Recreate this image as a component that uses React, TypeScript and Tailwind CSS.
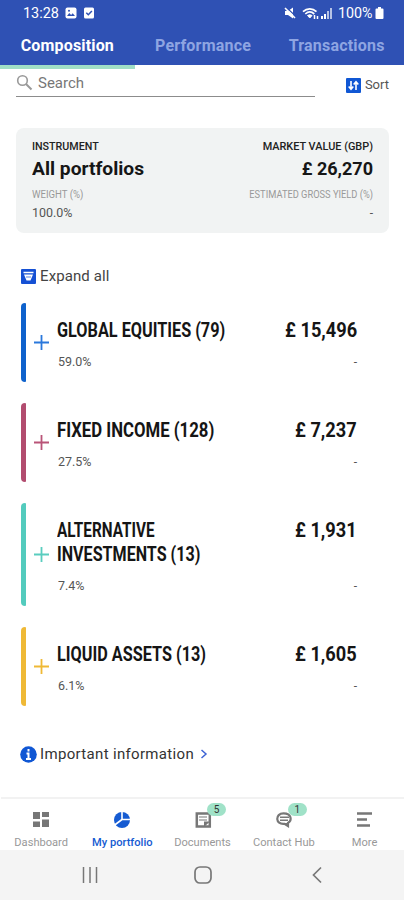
import clsx from "clsx";
import type { ReactNode } from "react";

type Holding = {
  name: ReactNode;
  value: string;
  weight: string;
  bar: string;
  plus: string;
  height: string;
};

const holdings: Holding[] = [
  {
    name: <span className="block origin-left scale-x-[0.812]">GLOBAL EQUITIES (79)</span>,
    value: "£ 15,496",
    weight: "59.0%",
    bar: "bg-[#0f62cc]",
    plus: "text-[#2a78dc]",
    height: "h-[79px]",
  },
  {
    name: <span className="block origin-left scale-x-[0.837]">FIXED INCOME (128)</span>,
    value: "£ 7,237",
    weight: "27.5%",
    bar: "bg-[#b24c6f]",
    plus: "text-[#b95478]",
    height: "h-[79px]",
  },
  {
    name: (
      <>
        <span className="block origin-left scale-x-[0.765]">ALTERNATIVE</span>
        <span className="block origin-left scale-x-[0.805]">INVESTMENTS (13)</span>
      </>
    ),
    value: "£ 1,931",
    weight: "7.4%",
    bar: "bg-[#53cbbd]",
    plus: "text-[#5acdbf]",
    height: "h-[103px]",
  },
  {
    name: <span className="block origin-left scale-x-[0.812]">LIQUID ASSETS (13)</span>,
    value: "£ 1,605",
    weight: "6.1%",
    bar: "bg-[#efb936]",
    plus: "text-[#efb936]",
    height: "h-[79px]",
  },
];

const StatusBar = () => (
  <div className="flex h-[26px] items-center pl-[23px] pr-5 text-white">
    <span className="w-[36px] text-[14px] leading-none">
      <span className="block origin-left scale-x-[1.03]">13:28</span>
    </span>
    <svg className="ml-[6px]" width="12" height="12" viewBox="0 0 12 12">
      <rect x=".5" y=".5" width="11" height="11" rx="2" fill="currentColor" />
      <path d="M2 9l2.3-3 1.8 2 1.6-1.7L10 9z" fill="#2f51b4" />
      <circle cx="4" cy="3.7" r="1" fill="#2f51b4" />
    </svg>
    <svg className="ml-[6px]" width="12" height="12" viewBox="0 0 12 12">
      <rect x="1" y=".5" width="10" height="11" rx="1.5" fill="currentColor" />
      <path d="M3.3 5.8l2 2 3.6-3.7" fill="none" stroke="#2f51b4" strokeWidth="1.5" />
    </svg>
    <div className="ml-auto flex items-center">
      <svg width="12" height="12" viewBox="0 0 12 12">
        <path d="M1 4h3L9 .5v11L4 8H1z" fill="currentColor" />
        <path d="M2.500 .5L12 9.500" stroke="#2f51b4" strokeWidth="1.200" />
        <path d="M1 1l10 10" stroke="currentColor" strokeWidth="1.600" />
      </svg>
      <svg className="ml-[6px]" width="17" height="13" viewBox="0 0 17 13" fill="none" stroke="currentColor">
        <path d="M1 4.700c4-3.800 9.500-3.800 13.500 0M3.300 7c2.700-2.500 6.200-2.500 9 0" strokeWidth="1.700" />
        <path d="M5.500 8.500q2.300-1.500 4.500 0L7.800 11z" fill="currentColor" />
        <path d="M12.500 8v4m3-3v3" strokeWidth="1.500" />
      </svg>
      <svg className="ml-[2px]" width="12" height="12" viewBox="0 0 12 12" fill="currentColor">
        <path d="M0 9h2v3H0zM3 7h2v5H3z" />
        <path d="M6 4h2v8H6zM9 1h2v11H9z" opacity=".65" />
      </svg>
      <span className="ml-[5px] w-[35px] text-[14px] leading-none">
        <span className="block origin-left scale-x-[1.02]">100%</span>
      </span>
      <svg className="ml-[2px]" width="9" height="12" viewBox="0 0 9 12">
        <path d="M3 0h3v1.500h1.500q1 0 1 1V11q0 1-1 1h-6q-1 0-1-1V2.500q0-1 1-1H3z" fill="currentColor" />
      </svg>
    </div>
  </div>
);

const Tabs = () => (
  <nav className="grid h-[39px] grid-cols-3 text-center text-[16px] font-bold leading-[39px]">
    <div className="border-b-4 border-[#a0dec6] text-white">
      <span className="inline-block tracking-[0.17px]">Composition</span>
    </div>
    <div className="text-[#8ea5e2]">
      <span className="inline-block translate-x-[1px] tracking-[0.2px]">Performance</span>
    </div>
    <div className="text-[#8ea5e2]">
      <span className="inline-block tracking-[0.2px]">Transactions</span>
    </div>
  </nav>
);

const SearchRow = () => (
  <div className="flex h-[32px] items-start pl-4 pr-[15px]">
    <div className="flex h-[32px] w-[299px] items-center border-b border-[#8c8c8c] text-[#777]">
      <svg className="mt-1" width="18" height="18" viewBox="0 0 18 18" fill="none" stroke="#999">
        <circle cx="6.500" cy="6.500" r="4.800" strokeWidth="1.600" />
        <path d="M10 10l5.500 5.500" strokeWidth="2" />
      </svg>
      <span className="ml-1 mt-1 text-[15px] leading-5">Search</span>
    </div>
    <div className="ml-auto mt-[10px] flex items-center text-[#555]">
      <svg width="15" height="15" viewBox="0 0 15 15">
        <rect width="15" height="15" rx="1" fill="#1057d4" />
        <path d="M5 3v8M2.700 8.500L5 11.200 7.300 8.500M10 12V4M7.700 6.500L10 3.800l2.300 2.700" fill="none" stroke="#fff" strokeWidth="1.600" />
      </svg>
      <span className="ml-1 text-[13px] leading-5">Sort</span>
    </div>
  </div>
);

const Summary = () => (
  <section className="mx-4 mt-[31px] flex h-[105px] w-[373px] justify-between rounded-lg bg-[#f1f3f3] px-4 pt-[11px]">
    <div>
      <p className="origin-left scale-x-[1.07] text-[10px] font-medium leading-[15px] text-[#222]">INSTRUMENT</p>
      <p className="mt-[2px] origin-left scale-x-[1.067] text-[18px] font-bold leading-[25px] text-[#161616]">All portfolios</p>
      <p className="mt-[6px] origin-left scale-x-[0.96] text-[10px] leading-[15px] text-[#999]">WEIGHT (%)</p>
      <p className="mt-[4px] origin-left scale-x-[1.04] text-[12px] leading-[15px] text-[#555]">100.0%</p>
    </div>
    <div className="text-right">
      <p className="origin-right scale-x-[1.09] text-[10px] font-medium leading-[15px] text-[#222]">MARKET VALUE (GBP)</p>
      <p className="mt-[2px] text-[18px] font-bold leading-[25px] text-[#161616]">£ 26,270</p>
      <p className="mt-[6px] origin-right scale-x-[0.93] text-[10px] leading-[15px] text-[#999]">ESTIMATED GROSS YIELD (%)</p>
      <p className="mt-[4px] text-[12px] leading-[15px] text-[#555]">-</p>
    </div>
  </section>
);

const HoldingRow = ({ name, value, weight, bar, plus, height }: Holding) => (
  <li className={clsx("flex", height)}>
    <div className={clsx("w-[5px] rounded-l-[4px] rounded-r-[1px]", bar)} />
    <svg className={clsx("ml-[8px] self-center", plus)} width="15" height="15" viewBox="0 0 15 15">
      <path d="M7.500 0v15M0 7.500h15" stroke="currentColor" strokeWidth="1.800" />
    </svg>
    <div className="ml-2 flex-1 pt-[15px]">
      <div className="flex justify-between text-[20px] font-bold leading-6 text-[#151515]">
        <div className="w-[200px] whitespace-nowrap">{name}</div>
        <span className="origin-right scale-x-[0.91] whitespace-nowrap">{value}</span>
      </div>
      <div className="mt-[12px] flex justify-between text-[12px] leading-4 text-[#555]">
        <span className="ml-px origin-left scale-x-[1.04]">{weight}</span>
        <span>-</span>
      </div>
    </div>
  </li>
);

const Badge = ({ children }: { children: ReactNode }) => (
  <span className="absolute -top-[8px] left-[13px] flex h-[13px] w-[19px] items-center justify-center rounded-full bg-[#a0e2c8] text-[10px] text-[#333]">
    {children}
  </span>
);

const NavItem = ({ label, icon, badge, active }: { label: string; icon: ReactNode; badge?: string; active?: boolean }) => (
  <div className={clsx("flex flex-col items-center pt-[12px]", active ? "text-[#155bd2]" : "text-[#777]")}>
    <div className="relative h-[18px] w-[18px]">
      <svg width="18" height="18" viewBox="0 0 18 18">
        {icon}
      </svg>
      {badge && <Badge>{badge}</Badge>}
    </div>
    <span
      className={clsx(
        "mt-[6px] scale-x-[1.11] whitespace-nowrap text-[10px] leading-4",
        active ? "font-medium" : "text-[#999]"
      )}
    >
      {label}
    </span>
  </div>
);

const BottomNav = () => (
  <nav className="-mr-px ml-px grid h-[53px] grid-cols-5 border-t-2 border-[#f2f2f2] bg-white">
    <NavItem label="Dashboard" icon={<path d="M1 1h7v7H1zM10 1h7v5h-7zM1 10.500h7V16H1zM10 8.500h7V16h-7z" fill="currentColor" />} />
    <NavItem
      label="My portfolio"
      active
      icon={
        <>
          <circle cx="9" cy="9" r="8" fill="currentColor" />
          <path d="M9 0v8.500h9M9 8.500L1 14.500" fill="none" stroke="#fff" strokeWidth="1.600" />
        </>
      }
    />
    <NavItem
      label="Documents"
      badge="5"
      icon={
        <>
          <path d="M2.800 2.500h13v13h-13z" fill="none" stroke="currentColor" strokeWidth="2.500" />
          <path d="M5 6h8M5 9h8" stroke="currentColor" strokeWidth="1.200" />
          <path d="M10 16v-5.500h6z" fill="currentColor" />
        </>
      }
    />
    <NavItem
      label="Contact Hub"
      badge="1"
      icon={
        <>
          <path d="M8.500 2.300c8.500 0 8.500 7.500 4.500 9.700v3l-3.500-2.200C0 14 0 2.300 8.500 2.300z" fill="none" stroke="currentColor" strokeWidth="2.200" />
          <path d="M5 6.300h9M5 9.300h8" stroke="currentColor" strokeWidth="1.500" />
          <path d="M9 12h5v4.500z" fill="currentColor" />
        </>
      }
    />
    <NavItem label="More" icon={<path d="M1 2.500h15M1 8.500h10M1 14.500h13" stroke="currentColor" strokeWidth="2.500" />} />
  </nav>
);

const SystemBar = () => (
  <div className="flex h-[50px] items-center bg-[#f4f4f4] pl-[82px] text-[#777]">
    <svg width="16" height="18" viewBox="0 0 16 18" stroke="currentColor" strokeWidth="1.500">
      <path d="M1.500 1v16M8 1v16M14.500 1v16" />
    </svg>
    <svg className="ml-[96px]" width="18" height="18" viewBox="0 0 18 18" fill="none" stroke="currentColor" strokeWidth="1.700">
      <rect x="1" y="1" width="16" height="16" rx="5" />
    </svg>
    <svg className="ml-[99px]" width="12" height="18" viewBox="0 0 12 18" fill="none" stroke="currentColor" strokeWidth="1.700">
      <path d="M10 1.500L2.500 9l7.500 7.500" />
    </svg>
  </div>
);

export default function App() {
  return (
    <div className="flex h-[900px] w-[404px] flex-col overflow-hidden bg-white font-['Roboto',sans-serif]">
      <header className="bg-[#2f51b4]">
        <StatusBar />
        <Tabs />
      </header>
      <SearchRow />
      <Summary />
      <div className="ml-[21px] mt-[33px] flex h-5 items-center text-[#444]">
        <svg width="15" height="15" viewBox="0 0 15 15">
          <rect width="15" height="15" rx="1" fill="#1550d4" />
          <path d="M2.500 3.500h10" stroke="#fff" strokeWidth="1.500" />
          <path d="M3 5.500h9l-2.500 6h-4z" fill="#fff" />
          <path d="M5 8h5" stroke="#1550d4" strokeWidth=".7" />
        </svg>
        <span className="ml-1 text-[15px] tracking-[0.1px]">Expand all</span>
      </div>
      <ul className="ml-[21px] mr-[47px] mt-[17px] flex flex-col gap-[21px]">
        {holdings.map((holding) => (
          <HoldingRow key={holding.value} {...holding} />
        ))}
      </ul>
      <div className="ml-5 mt-[38px] flex h-5 items-center text-[#333]">
        <svg width="17" height="17" viewBox="0 0 17 17">
          <circle cx="8.500" cy="8.500" r="8.300" fill="#1057d4" />
          <path d="M8.500 3v2.500M6.500 7.500h2V13M6 13h5" fill="none" stroke="#fff" strokeWidth="2" />
        </svg>
        <span className="ml-[3px] text-[15px] tracking-[0.33px]">Important information</span>
        <svg className="ml-[6px]" width="8" height="10" viewBox="0 0 8 10">
          <path d="M1.500 1L6 5 1.500 9" fill="none" stroke="#3d63d4" strokeWidth="1.500" />
        </svg>
      </div>
      <div className="mt-auto">
        <BottomNav />
        <SystemBar />
      </div>
    </div>
  );
}
